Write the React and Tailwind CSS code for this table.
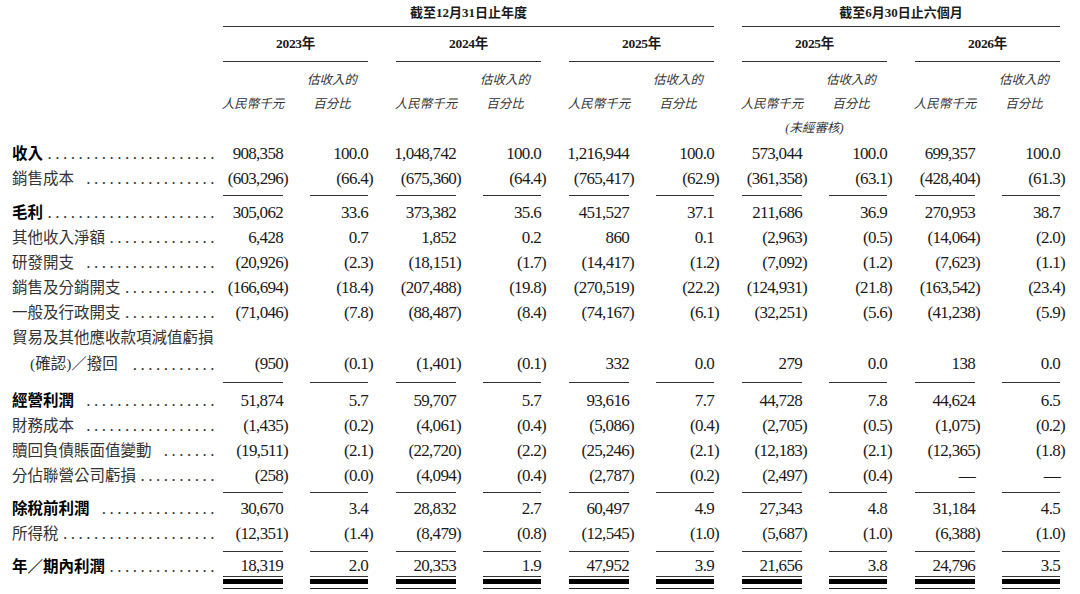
import React from "react";

const rows = [
  { label: "收入", bold: true, vals: ["908,358", "100.0", "1,048,742", "100.0", "1,216,944", "100.0", "573,044", "100.0", "699,357", "100.0"] },
  { label: "銷售成本", gap: true, vals: ["(603,296)", "(66.4)", "(675,360)", "(64.4)", "(765,417)", "(62.9)", "(361,358)", "(63.1)", "(428,404)", "(61.3)"] },
  { sep: "h-[9px]" },
  { label: "毛利", bold: true, vals: ["305,062", "33.6", "373,382", "35.6", "451,527", "37.1", "211,686", "36.9", "270,953", "38.7"] },
  { label: "其他收入淨額", vals: ["6,428", "0.7", "1,852", "0.2", "860", "0.1", "(2,963)", "(0.5)", "(14,064)", "(2.0)"] },
  { label: "研發開支", gap: true, vals: ["(20,926)", "(2.3)", "(18,151)", "(1.7)", "(14,417)", "(1.2)", "(7,092)", "(1.2)", "(7,623)", "(1.1)"] },
  { label: "銷售及分銷開支", vals: ["(166,694)", "(18.4)", "(207,488)", "(19.8)", "(270,519)", "(22.2)", "(124,931)", "(21.8)", "(163,542)", "(23.4)"] },
  { label: "一般及行政開支", vals: ["(71,046)", "(7.8)", "(88,487)", "(8.4)", "(74,167)", "(6.1)", "(32,251)", "(5.6)", "(41,238)", "(5.9)"] },
  { label: "貿易及其他應收款項減值虧損", noDots: true, tall: true },
  { label: "(確認)／撥回", indent: true, gap: true, tall: true, vals: ["(950)", "(0.1)", "(1,401)", "(0.1)", "332", "0.0", "279", "0.0", "138", "0.0"] },
  { sep: "h-[11px]" },
  { label: "經營利潤", bold: true, gap: true, vals: ["51,874", "5.7", "59,707", "5.7", "93,616", "7.7", "44,728", "7.8", "44,624", "6.5"] },
  { label: "財務成本", gap: true, vals: ["(1,435)", "(0.2)", "(4,061)", "(0.4)", "(5,086)", "(0.4)", "(2,705)", "(0.5)", "(1,075)", "(0.2)"] },
  { label: "贖回負債賬面值變動", gap: true, vals: ["(19,511)", "(2.1)", "(22,720)", "(2.2)", "(25,246)", "(2.1)", "(12,183)", "(2.1)", "(12,365)", "(1.8)"] },
  { label: "分佔聯營公司虧損", vals: ["(258)", "(0.0)", "(4,094)", "(0.4)", "(2,787)", "(0.2)", "(2,497)", "(0.4)", "—", "—"] },
  { sep: "h-[8px]" },
  { label: "除稅前利潤", bold: true, gap: true, vals: ["30,670", "3.4", "28,832", "2.7", "60,497", "4.9", "27,343", "4.8", "31,184", "4.5"] },
  { label: "所得稅", vals: ["(12,351)", "(1.4)", "(8,479)", "(0.8)", "(12,545)", "(1.0)", "(5,687)", "(1.0)", "(6,388)", "(1.0)"] },
  { sep: "h-[10px]" },
];

const total = { label: "年／期內利潤", bold: true, vals: ["18,319", "2.0", "20,353", "1.9", "47,952", "3.9", "21,656", "3.8", "24,796", "3.5"] };

const groups = [0, 1, 2, 3, 4];

// closing bracket hangs past the column edge, as in the printed table
const Num = ({ v }) =>
  v.startsWith("(") ? <span className="inline-block -mr-[5px]">{v}</span> : v;

// how many leader dots fit after a label
const dotCount = (row) => {
  let w = row.indent ? 18 : 0;
  for (const ch of row.label) w += ch === "(" || ch === ")" ? 5.2 : 15.5;
  if (row.gap) w += 6;
  return Math.max(0, Math.floor((203 - w) / 7.75));
};

const Label = ({ row }) => (
  <div className={`w-[211px] flex items-center pr-[5px] text-[15.5px] ${row.indent ? "pl-[18px]" : ""}`}>
    <span className={`whitespace-nowrap ${row.bold ? "font-bold text-black" : "text-[#333]"} ${row.gap ? "mr-[6px]" : ""}`}>
      {row.label}
    </span>
    {!row.noDots && (
      <span className="ml-auto whitespace-nowrap tracking-[3.5px] text-[17px] leading-none text-[#333]">
        {".".repeat(dotCount(row))}
      </span>
    )}
  </div>
);

const Sep = ({ h }) => (
  <div className={`flex items-center ${h}`}>
    <div className="w-[211px]" />
    <div className="flex gap-[28px]">
      {groups.map((g) => (
        <div key={g} className="flex justify-between w-[145px]">
          <div className="w-[60px] h-px bg-[#333]" />
          <div className="w-[58px] h-px bg-[#333]" />
        </div>
      ))}
    </div>
  </div>
);

const DataRow = ({ row }) => (
  <div className={`flex ${row.tall ? "h-[26px]" : "h-[25px]"}`}>
    <Label row={row} />
    <div className="flex gap-[28px]">
      {groups.map((g) => (
        <div key={g} className="flex justify-between w-[145px] text-[17px] tracking-[-0.7px] text-[#1a1a1a]">
          <div className="w-[60px] flex items-center justify-end">
            {row.vals && <Num v={row.vals[g * 2]} />}
          </div>
          <div className="w-[58px] flex items-center justify-end">
            {row.vals && <Num v={row.vals[g * 2 + 1]} />}
          </div>
        </div>
      ))}
    </div>
  </div>
);

export default function App() {
  return (
    <div className="w-[1080px] h-[594px] overflow-hidden bg-white pl-[12px] font-['Liberation_Serif','Noto_Sans_CJK_TC',serif] text-[#1a1a1a]">
      {/* period headings */}
      <div className="flex h-[27px]">
        <div className="w-[211px]" />
        <div className="flex gap-[28px]">
          <div className="w-[491px] border-b border-[#333] flex items-center justify-center font-bold text-[13px]">
            截至12月31日止年度
          </div>
          <div className="w-[318px] border-b border-[#333] flex items-center justify-center font-bold text-[13px]">
            截至6月30日止六個月
          </div>
        </div>
      </div>

      {/* years */}
      <div className="flex h-[35px]">
        <div className="w-[211px]" />
        <div className="flex gap-[28px]">
          {["2023年", "2024年", "2025年", "2025年", "2026年"].map((y, i) => (
            <div key={i} className="w-[145px] border-b border-[#333] flex items-center justify-center font-bold text-[13.5px] tracking-[-0.3px]">
              {y}
            </div>
          ))}
        </div>
      </div>

      {/* column captions */}
      <div className="pt-[6px] italic text-[12.5px] text-[#333]">
        <div className="flex h-[24px]">
          <div className="w-[211px]" />
          <div className="flex gap-[28px]">
            {groups.map((g) => (
              <div key={g} className="flex justify-between w-[145px]">
                <div className="w-[60px]" />
                <div className="w-[58px] flex items-center justify-center pr-[14px] whitespace-nowrap">估收入的</div>
              </div>
            ))}
          </div>
        </div>
        <div className="flex h-[24px]">
          <div className="w-[211px]" />
          <div className="flex gap-[28px]">
            {groups.map((g) => (
              <div key={g} className="flex justify-between w-[145px]">
                <div className="w-[60px] flex items-center justify-center whitespace-nowrap">人民幣千元</div>
                <div className="w-[58px] flex items-center justify-center pr-[14px] whitespace-nowrap">百分比</div>
              </div>
            ))}
          </div>
        </div>
        <div className="flex h-[25px]">
          <div className="w-[211px]" />
          <div className="flex gap-[28px]">
            {groups.map((g) => (
              <div key={g} className="w-[145px] flex items-center justify-center">
                {g === 3 ? "(未經審核)" : ""}
              </div>
            ))}
          </div>
        </div>
      </div>

      {/* body */}
      {rows.map((row, i) => (row.sep ? <Sep key={i} h={row.sep} /> : <DataRow key={i} row={row} />))}

      <div className="flex h-[21px]">
        <Label row={total} />
        <div className="flex gap-[28px]">
          {groups.map((g) => (
            <div key={g} className="flex justify-between w-[145px] text-[17px] tracking-[-0.7px]">
              <div className="w-[60px] flex items-center justify-end border-b border-[#333]">{total.vals[g * 2]}</div>
              <div className="w-[58px] flex items-center justify-end border-b border-[#333]">{total.vals[g * 2 + 1]}</div>
            </div>
          ))}
        </div>
      </div>
      <div className="flex">
        <div className="w-[211px]" />
        <div className="flex gap-[28px]">
          {groups.map((g) => (
            <div key={g} className="flex justify-between w-[145px]">
              {[60, 58].map((w) => (
                <div key={w} className={w === 60 ? "w-[60px]" : "w-[58px]"}>
                  <div className="mt-[2px] h-[5px] bg-black" />
                  <div className="mt-[4px] h-px bg-[#222]" />
                </div>
              ))}
            </div>
          ))}
        </div>
      </div>
    </div>
  );
}
